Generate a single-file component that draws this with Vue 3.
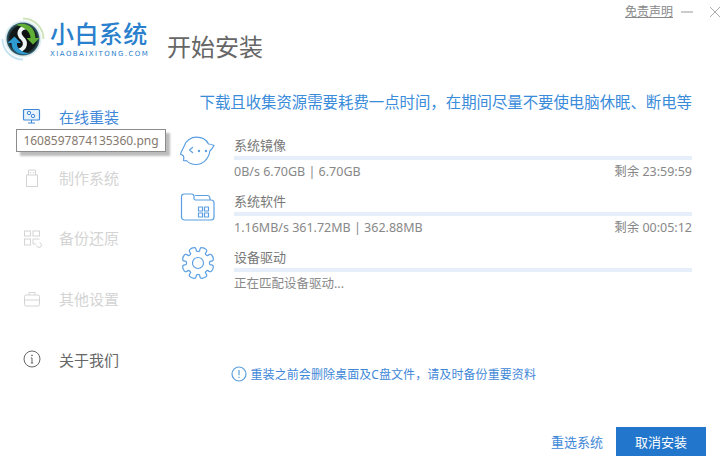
<script setup>
const nav = [
  { key: 'online', label: '在线重装', state: 'active' },
  { key: 'usb', label: '制作系统', state: 'off' },
  { key: 'backup', label: '备份还原', state: 'off' },
  { key: 'other', label: '其他设置', state: 'off' },
  { key: 'about', label: '关于我们', state: 'plain' }
]
const tasks = [
  { key: 'chat', title: '系统镜像', info: '0B/s 6.70GB | 6.70GB', left: '剩余 23:59:59' },
  { key: 'folder', title: '系统软件', info: '1.16MB/s 361.72MB | 362.88MB', left: '剩余 00:05:12' },
  { key: 'gear', title: '设备驱动', info: '正在匹配设备驱动...', left: '' }
]
function gearPath() {
  const pt = (r, deg) => {
    const a = (deg * Math.PI) / 180
    return `${(17 + r * Math.cos(a)).toFixed(2)} ${(17 + r * Math.sin(a)).toFixed(2)}`
  }
  let d = ''
  for (let i = 0; i < 8; i++) {
    const c = i * 45 + 22.5
    d += `${i === 0 ? 'M' : 'L'}${pt(12, c - 15)} `
    d += `C${pt(13.5, c - 15)} ${pt(15.8, c - 15)} ${pt(15.8, c - 8)} `
    d += `C${pt(16.2, c - 3)} ${pt(16.2, c + 3)} ${pt(15.8, c + 8)} `
    d += `C${pt(15.8, c + 15)} ${pt(13.5, c + 15)} ${pt(12, c + 15)} `
    d += `Q${pt(11, c + 22.5)} ${pt(12, c + 30)} `
  }
  return d + 'Z'
}
const gear = gearPath()
</script>

<template>
  <div class="app">
    <header class="top">
      <svg class="logo" width="44" height="44" viewBox="0 0 44 44">
        <defs>
          <radialGradient id="core" cx="50%" cy="50%" r="50%">
            <stop offset="0%" stop-color="#0c0c0c" />
            <stop offset="80%" stop-color="#12181a" />
            <stop offset="100%" stop-color="#3a6a78" />
          </radialGradient>
        </defs>
        <path d="M22 1.500A20.500 20.500 0 0 1 42.500 22" fill="none" stroke="#cfe3b8" stroke-width="1.800" />
        <path d="M22 42.500A20.500 20.500 0 0 1 1.500 22" fill="none" stroke="#c4e3f0" stroke-width="1.800" />
        <circle cx="22" cy="22" r="18.500" fill="#e2eff2" />
        <circle cx="22" cy="22" r="16.500" fill="url(#core)" />
        <path d="M26 10C18 11 16.500 17 21 21 25.500 25 25 31 18 33.500" fill="none" stroke="#eef3f3" stroke-width="4" />
        <path d="M15 8C24 4.500 34 9 34.500 21H38.500L32 27.500 25.500 21H29.500C29.500 15 24 10 15 8Z" fill="#5fae36" />
        <path d="M28 36.500C19 39.500 10 34 10.500 26H6.500L13.500 19.500 20 26H16C15.500 31 20 35 28 36.500Z" fill="#2e9bd2" />
      </svg>
      <div class="brand">
        <div class="brand-name">小白系统</div>
        <div class="brand-sub">XIAOBAIXITONG.COM</div>
      </div>
      <h1 class="heading">开始安装</h1>
      <div class="controls">
        <a class="legal">免责声明</a>
        <svg class="min" width="12" height="12" viewBox="0 0 12 12"><path d="M0 6h12" stroke="#999" fill="none" /></svg>
        <svg class="close" width="12" height="12" viewBox="0 0 12 12"><path d="M1 1l10 10M11 1L1 11" stroke="#aaa" fill="none" /></svg>
      </div>
    </header>

    <div class="body">
      <nav class="side">
        <div v-for="item in nav" :key="item.key" class="nav-item" :class="item.state">
          <svg class="nav-icon" width="18" height="18" viewBox="0 0 18 18" fill="none" stroke="currentColor" stroke-width="1">
            <template v-if="item.key === 'online'">
              <rect x=".5" y="2.500" width="16" height="10.500" rx="1" fill="#e8f2fc" stroke-width="1.200" />
              <path d="M8.500 13v3M5 16h7" />
              <circle cx="6" cy="6" r="1.700" />
              <circle cx="10" cy="9" r="1.700" />
            </template>
            <template v-else-if="item.key === 'usb'">
              <rect x="3.500" y="7" width="11" height="11.500" />
              <path d="M5.500 7V2h7v5M7.500 4v1M10.500 4v1" />
            </template>
            <template v-else-if="item.key === 'backup'">
              <rect x="1.500" y="2" width="6" height="5" />
              <rect x="10" y="2" width="6.500" height="5" />
              <rect x="1.500" y="10" width="6" height="6" />
              <path d="M16.500 10H10v5h3M13.500 16.500a2.500 2.500 0 1 0 3-3" />
            </template>
            <template v-else-if="item.key === 'other'">
              <rect x="1.500" y="5" width="15" height="11" rx="1.500" />
              <path d="M6 5V2.500h6V5M1.500 10h15" />
            </template>
            <template v-else>
              <circle cx="9" cy="9" r="8" />
              <path d="M9 8v5M7.800 13h2.400M7.800 8H9" />
              <circle cx="9" cy="5.400" r=".5" />
            </template>
          </svg>
          <span>{{ item.label }}</span>
        </div>
        <div class="tip">1608597874135360.png</div>
      </nav>

      <main class="main">
        <p class="notice">下载且收集资源需要耗费一点时间，在期间尽量不要使电脑休眠、断电等</p>

        <section class="tasks">
          <div v-for="task in tasks" :key="task.key" class="task">
            <svg class="task-icon" :class="task.key" width="34" height="34" viewBox="0 0 34 34" fill="none" stroke="#5b9fe2" stroke-width="1.200" stroke-linejoin="round" stroke-linecap="round">
              <template v-if="task.key === 'chat'">
                <path d="M3.500 9.500C5 4.500 10 1.200 15.500 1.200 21 1.200 25.500 4.200 27.500 8 29.500 8 31.500 8.700 33 9.500 32 11.500 30.500 13.500 28.800 15 28 22.500 22 28.500 15 28.500 11 28.500 7.500 27 5.500 24.500 4.500 25 3.500 25 2.500 24.500 3 22.500 3 21.500 2.500 20L-.5 18C.5 15 2 12.500 3.500 9.500Z" />
                <path d="M11.500 11.500 8.500 14 11.500 16.500" />
                <circle cx="18" cy="15" r=".6" fill="#5b9fe2" />
                <circle cx="25" cy="15" r=".6" fill="#5b9fe2" />
              </template>
              <template v-else-if="task.key === 'folder'">
                <path d="M.5 25V4.500A2.500 2.500 0 0 1 3 2H10.500C12 2 13 3 13 4.500V6.500C13 7.500 13.500 8 14.500 8H30A3 3 0 0 1 33 11V25A3 3 0 0 1 30 28H3.500A3 3 0 0 1 .5 25Z" />
                <path d="M14.500 3.500H26.500C28 3.500 29 5 29 7.500" />
                <rect x="17.500" y="15" width="4" height="4" />
                <rect x="23.500" y="15" width="4" height="4" />
                <rect x="17.500" y="21" width="4" height="4" />
                <rect x="23.500" y="21" width="4" height="4" />
              </template>
              <template v-else>
                <path :d="gear" />
                <circle cx="17" cy="17" r="5.500" />
              </template>
            </svg>
            <div class="task-body">
              <div class="task-title">{{ task.title }}</div>
              <div class="bar"></div>
              <div class="task-info">
                <span>{{ task.info }}</span>
                <span>{{ task.left }}</span>
              </div>
            </div>
          </div>
        </section>

        <div class="warn">
          <svg width="16" height="16" viewBox="0 0 16 16" fill="none" stroke="#5b9fe0" stroke-width="1.200">
            <circle cx="8" cy="8" r="7" />
            <path d="M8 4v5.200M8 10.800v1.200" />
          </svg>
          <span>重装之前会删除桌面及C盘文件，请及时备份重要资料</span>
        </div>

        <footer class="foot">
          <a class="reselect">重选系统</a>
          <button class="cancel">取消安装</button>
        </footer>
      </main>
    </div>
  </div>
</template>

<style>
html, body { margin: 0; background: #fff; }
</style>

<style scoped>
.app {
  width: 721px;
  height: 456px;
  display: flex;
  flex-direction: column;
  overflow: hidden;
  background: #fff;
  font-family: "Noto Sans", "Noto Sans CJK SC", sans-serif;
  font-size: 12px;
  color: #777;
}
.top {
  height: 86px;
  flex: none;
  display: flex;
  align-items: flex-start;
}
.logo { margin: 17px 0 0 1px; flex: none; }
.brand { margin: 20px 0 0 5px; width: 117px; flex: none; }
.brand-name {
  font-size: 24px;
  line-height: 28px;
  font-weight: 500;
  letter-spacing: .4px;
  color: #2a80cc;
  white-space: nowrap;
}
.brand-sub {
  font-family: "DejaVu Sans", sans-serif;
  font-size: 7px;
  line-height: 9px;
  margin-top: 2px;
  letter-spacing: 1.450px;
  color: #2a80cc;
  white-space: nowrap;
}
.heading {
  margin: 30px 0 0;
  font-size: 24px;
  line-height: 34px;
  font-weight: 400;
  color: #666;
  white-space: nowrap;
}
.controls {
  margin: 4px 0 0 auto;
  display: flex;
  align-items: center;
  height: 16px;
}
.legal {
  color: #888;
  text-decoration: underline;
  line-height: 16px;
}
.min { margin-left: 8px; }
.close { margin: 0 0 0 16px; }
.body {
  flex: 1;
  min-height: 0;
  display: flex;
}
.side {
  width: 167px;
  flex: none;
  position: relative;
}
.nav-item {
  height: 60.750px;
  display: flex;
  align-items: center;
  padding-left: 23px;
  font-size: 15px;
  gap: 18px;
}
.nav-icon { overflow: visible; }
.nav-item.active { color: #3f88d8; }
.nav-item.off { color: #d4d4d4; }
.nav-item.plain { color: #666; }
.tip {
  position: absolute;
  left: 16px;
  top: 43px;
  width: 148px;
  height: 21px;
  border: 1px solid #8c8c8c;
  background: #fff;
  color: #85796f;
  font-size: 12px;
  line-height: 21px;
  text-align: center;
  box-shadow: 4px 4px 2px rgba(120, 120, 120, .5);
}
.main {
  flex: 1;
  min-width: 0;
  padding: 0 29px 0 14px;
  display: flex;
  flex-direction: column;
}
.notice {
  margin: 0 0 18px;
  height: 32px;
  line-height: 34px;
  font-size: 15.400px;
  color: #3a8cdb;
  text-align: right;
  white-space: nowrap;
}
.tasks {
  display: flex;
  flex-direction: column;
  gap: 10px;
}
.task {
  display: flex;
  gap: 19px;
  align-items: flex-start;
}
.task-icon { flex: none; overflow: visible; }
.task-icon.gear { margin-top: -2px; }
.task-body { flex: 1; min-width: 0; }
.task-title {
  height: 18px;
  line-height: 18px;
  margin-bottom: 2px;
  font-size: 13px;
  color: #777;
}
.bar { height: 4px; background: #e6eefa; }
.task-info {
  height: 22px;
  line-height: 24px;
  font-size: 12.500px;
  display: flex;
  justify-content: space-between;
  color: #888;
}
.warn {
  margin: 70px 0 0 50px;
  height: 20px;
  display: flex;
  align-items: center;
  gap: 3.500px;
  color: #3f88d8;
  font-size: 12px;
  letter-spacing: .08px;
}
.foot {
  margin: auto -14px 0 0;
  display: flex;
  justify-content: flex-end;
  align-items: center;
  gap: 13px;
}
.reselect { color: #3f88d8; font-size: 13px; }
.cancel {
  width: 90px;
  height: 29px;
  padding: 0;
  border: 0;
  background: #2277cc;
  color: #fff;
  font: inherit;
  font-size: 13px;
}
</style>
